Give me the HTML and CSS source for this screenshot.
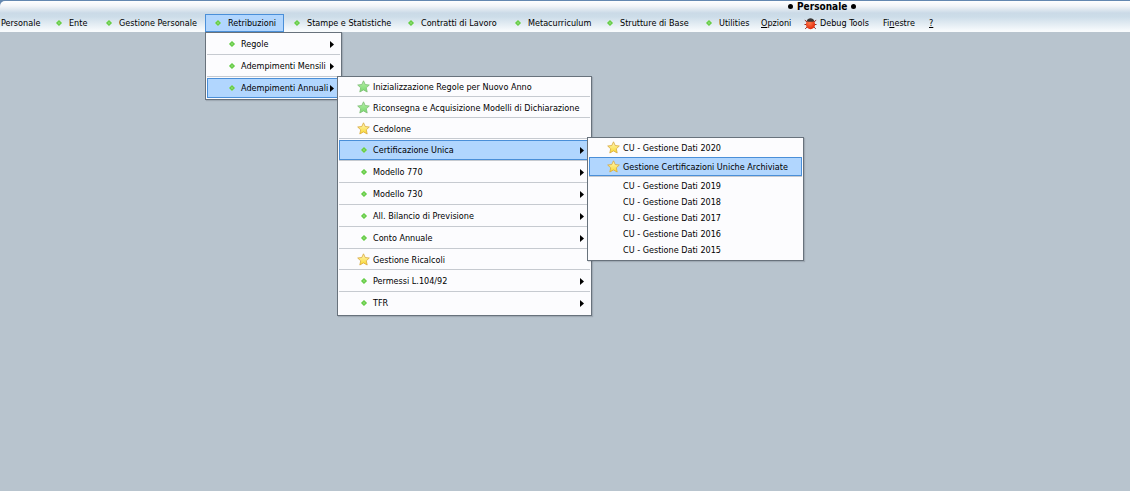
FILE: index.html
```html
<!DOCTYPE html>
<html lang="it">
<head>
    <meta charset="UTF-8">
    <meta name="viewport" content="width=device-width, initial-scale=1.0">
    <title>Personale</title>
    <link rel="stylesheet" href="styles.css">
</head>
<body>
    <!-- Shared icons -->
    <svg class="sprite" aria-hidden="true">
        <defs>
            <linearGradient id="goldFill" x1="0" y1="0" x2="0" y2="1">
                <stop offset="0" stop-color="#fff8c0"/>
                <stop offset="1" stop-color="#fad82c"/>
            </linearGradient>
            <linearGradient id="greenFill" x1="0" y1="0" x2="0" y2="1">
                <stop offset="0" stop-color="#b8f0ac"/>
                <stop offset="1" stop-color="#78d86c"/>
            </linearGradient>
            <radialGradient id="bugFill" cx="0.4" cy="0.35" r="0.7">
                <stop offset="0" stop-color="#ff7a4a"/>
                <stop offset="1" stop-color="#e02408"/>
            </radialGradient>
        </defs>
        <symbol id="dot" viewBox="0 0 6 6">
            <path d="M3 0.2 L5.8 3 L3 5.8 L0.2 3 Z" fill="#5cc83c" stroke="#8fdc78" stroke-width="0.8"/>
            <circle cx="3" cy="3" r="0.8" fill="#b4ec9c"/>
        </symbol>
        <symbol id="star" viewBox="0 0 13 13">
            <path d="M6.5 0.8 L8.2 4.5 L12.3 5 L9.3 7.8 L10.2 12 L6.5 9.9 L2.8 12 L3.7 7.8 L0.7 5 L4.8 4.5 Z" stroke-width="0.8" stroke-linejoin="round"/>
        </symbol>
        <symbol id="bug" viewBox="0 0 13 13">
            <path d="M0.8 3.2 L3 4.8 M0.5 7.5 H3 M1.2 11.8 L3.4 9.8 M12.2 3.2 L10 4.8 M12.5 7.5 H10 M11.8 11.8 L9.6 9.8" stroke="#8c2c20" stroke-width="1" fill="none"/>
            <ellipse cx="6.5" cy="7.4" rx="4.6" ry="4.8" fill="url(#bugFill)"/>
            <path d="M2.8 4.2 C3.4 0.4 9.6 0.4 10.2 4.2 C8 5 5 5 2.8 4.2 Z" fill="#3c3634"/>
        </symbol>
        <symbol id="arrow" viewBox="0 0 4 7">
            <path d="M0 0 L4 3.5 L0 7 Z" fill="#000"/>
        </symbol>
    </svg>

    <header class="top">
        <div class="top-inner">
            <h1 class="title"><span class="bullet"></span>Personale<span class="bullet"></span></h1>
            <nav>
                <ul class="menubar">
                    <li><button class="bar-item first">Personale</button></li>
                    <li><button class="bar-item"><svg class="dot"><use href="#dot"/></svg>Ente</button></li>
                    <li><button class="bar-item"><svg class="dot"><use href="#dot"/></svg>Gestione Personale</button></li>
                    <li class="has-menu">
                        <button class="bar-item active"><svg class="dot"><use href="#dot"/></svg>Retribuzioni</button>
                        <ul class="menu menu-main">
                            <li><button class="item"><span class="icon"><svg class="dot"><use href="#dot"/></svg></span>Regole<svg class="arrow"><use href="#arrow"/></svg></button></li>
                            <li class="sep"></li>
                            <li><button class="item"><span class="icon"><svg class="dot"><use href="#dot"/></svg></span>Adempimenti Mensili<svg class="arrow"><use href="#arrow"/></svg></button></li>
                            <li class="sep"></li>
                            <li class="has-menu">
                                <button class="item active"><span class="icon"><svg class="dot"><use href="#dot"/></svg></span>Adempimenti Annuali<svg class="arrow"><use href="#arrow"/></svg></button>
                                <ul class="menu menu-sub menu-annual">
                                    <li><button class="item leaf"><span class="icon"><svg class="star green"><use href="#star"/></svg></span>Inizializzazione Regole per Nuovo Anno</button></li>
                                    <li class="sep"></li>
                                    <li><button class="item leaf"><span class="icon"><svg class="star green"><use href="#star"/></svg></span>Riconsegna e Acquisizione Modelli di Dichiarazione</button></li>
                                    <li class="sep"></li>
                                    <li><button class="item leaf"><span class="icon"><svg class="star"><use href="#star"/></svg></span>Cedolone</button></li>
                                    <li class="sep"></li>
                                    <li class="has-menu">
                                        <button class="item active"><span class="icon"><svg class="dot"><use href="#dot"/></svg></span>Certificazione Unica<svg class="arrow"><use href="#arrow"/></svg></button>
                                        <ul class="menu menu-sub menu-cu">
                                            <li><button class="item leaf"><span class="icon"><svg class="star"><use href="#star"/></svg></span>CU - Gestione Dati 2020</button></li>
                                            <li><button class="item leaf active"><span class="icon"><svg class="star"><use href="#star"/></svg></span>Gestione Certificazioni Uniche Archiviate</button></li>
                                            <li class="sep"></li>
                                            <li><button class="item plain"><span class="icon"></span>CU - Gestione Dati 2019</button></li>
                                            <li><button class="item plain"><span class="icon"></span>CU - Gestione Dati 2018</button></li>
                                            <li><button class="item plain"><span class="icon"></span>CU - Gestione Dati 2017</button></li>
                                            <li><button class="item plain"><span class="icon"></span>CU - Gestione Dati 2016</button></li>
                                            <li><button class="item plain"><span class="icon"></span>CU - Gestione Dati 2015</button></li>
                                        </ul>
                                    </li>
                                    <li class="sep"></li>
                                    <li><button class="item"><span class="icon"><svg class="dot"><use href="#dot"/></svg></span>Modello 770<svg class="arrow"><use href="#arrow"/></svg></button></li>
                                    <li class="sep"></li>
                                    <li><button class="item"><span class="icon"><svg class="dot"><use href="#dot"/></svg></span>Modello 730<svg class="arrow"><use href="#arrow"/></svg></button></li>
                                    <li class="sep"></li>
                                    <li><button class="item"><span class="icon"><svg class="dot"><use href="#dot"/></svg></span>All. Bilancio di Previsione<svg class="arrow"><use href="#arrow"/></svg></button></li>
                                    <li class="sep"></li>
                                    <li><button class="item"><span class="icon"><svg class="dot"><use href="#dot"/></svg></span>Conto Annuale<svg class="arrow"><use href="#arrow"/></svg></button></li>
                                    <li class="sep"></li>
                                    <li><button class="item leaf"><span class="icon"><svg class="star"><use href="#star"/></svg></span>Gestione Ricalcoli</button></li>
                                    <li class="sep"></li>
                                    <li><button class="item"><span class="icon"><svg class="dot"><use href="#dot"/></svg></span>Permessi L.104/92<svg class="arrow"><use href="#arrow"/></svg></button></li>
                                    <li class="sep"></li>
                                    <li><button class="item"><span class="icon"><svg class="dot"><use href="#dot"/></svg></span>TFR<svg class="arrow"><use href="#arrow"/></svg></button></li>
                                </ul>
                            </li>
                        </ul>
                    </li>
                    <li><button class="bar-item"><svg class="dot"><use href="#dot"/></svg>Stampe e Statistiche</button></li>
                    <li><button class="bar-item"><svg class="dot"><use href="#dot"/></svg>Contratti di Lavoro</button></li>
                    <li><button class="bar-item"><svg class="dot"><use href="#dot"/></svg>Metacurriculum</button></li>
                    <li><button class="bar-item"><svg class="dot"><use href="#dot"/></svg>Strutture di Base</button></li>
                    <li><button class="bar-item"><svg class="dot"><use href="#dot"/></svg>Utilities</button></li>
                    <li><button class="bar-item text-only"><span><u>O</u>pzioni</span></button></li>
                    <li><button class="bar-item with-bug"><svg class="bug"><use href="#bug"/></svg>Debug Tools</button></li>
                    <li><button class="bar-item text-only"><span>Fi<u>n</u>estre</span></button></li>
                    <li><button class="bar-item text-only"><u>?</u></button></li>
                </ul>
            </nav>
        </div>
    </header>
</body>
</html>
```
FILE: styles.css
```css
* {
    box-sizing: border-box;
}
body {
    margin: 0;
    min-height: 100vh;
    overflow: hidden;
    background-color: #b8c4ce;
    font-family: "DejaVu Sans Condensed", Tahoma, sans-serif;
    font-size: 9px;
    color: #000;
}
ul {
    list-style: none;
    margin: 0;
    padding: 0;
}
button {
    font: inherit;
    color: inherit;
    background: none;
    border: 1px solid transparent;
    border-radius: 0;
    padding: 0;
    text-align: left;
    white-space: nowrap;
}
svg {
    flex: none;
}
.sprite {
    position: absolute;
    width: 0;
    height: 0;
}

/* Title and menu bar */
.top {
    padding-top: 1px;
    background-color: #6488b0;
}
.top-inner {
    padding-top: 1px;
    border-top-left-radius: 5px;
    background: linear-gradient(#ffffff 0, #f2f5f8 5px, #cbdae7 12px, #cddde9 16px, #f8fbfd 30px);
}
.title {
    display: flex;
    align-items: center;
    gap: 4px;
    margin: 0;
    padding: 0 0 3px 788px;
    height: 12px;
    font-size: 10px;
    line-height: 9px;
}
.bullet {
    width: 5px;
    height: 5px;
    border-radius: 50%;
    background-color: #000;
}
.menubar {
    display: grid;
    grid-template-columns: 46px 50px 109px 79px 114px 107px 92px 99px 58px 43px 79px 46px 20px;
}
.bar-item {
    display: flex;
    align-items: center;
    gap: 7px;
    width: 100%;
    height: 18px;
    padding: 0 0 0 9px;
}
.bar-item.first {
    padding-left: 0;
}
.bar-item.text-only {
    padding-left: 6px;
}
.bar-item.with-bug {
    padding-left: 6px;
    gap: 3px;
}
.bar-item.active {
    border-color: #4a8fd8;
    background-color: #b1d6fe;
}
.has-menu {
    position: relative;
}

/* Drop-down menus */
.menu {
    position: absolute;
    z-index: 10;
    padding: 1px;
    border: 1px solid #68727c;
    background-color: #fcfcfe;
    box-shadow: 1px 1px 1px rgba(60, 70, 80, 0.2);
}
.menu-main {
    top: 18px;
    left: 0;
    width: 137px;
}
.menu-sub {
    padding: 0 1px 2px;
}
.menu-annual {
    top: -2px;
    left: 130px;
    width: 255px;
}
.menu-cu {
    top: -3px;
    left: 248px;
    width: 217px;
}
.item {
    display: flex;
    align-items: center;
    width: 100%;
    height: 20px;
    padding-right: 5px;
}
.item.leaf {
    height: 19px;
}
.item.plain {
    height: 16px;
}
.item.active {
    border-color: #4a8fd8;
    background-color: #b1d6fe;
}
.sep {
    height: 2px;
    border-top: 1px solid #c6cad0;
}
.icon {
    display: flex;
    justify-content: center;
    width: 13px;
    margin: 0 3px 0 17px;
}
.dot {
    width: 6px;
    height: 6px;
}
.star {
    width: 13px;
    height: 13px;
    fill: url(#goldFill);
    stroke: #d8a83c;
}
.star.green {
    fill: url(#greenFill);
    stroke: #7cbc74;
}
.bug {
    width: 13px;
    height: 13px;
}
.arrow {
    width: 4px;
    height: 7px;
    margin-left: auto;
}
```
